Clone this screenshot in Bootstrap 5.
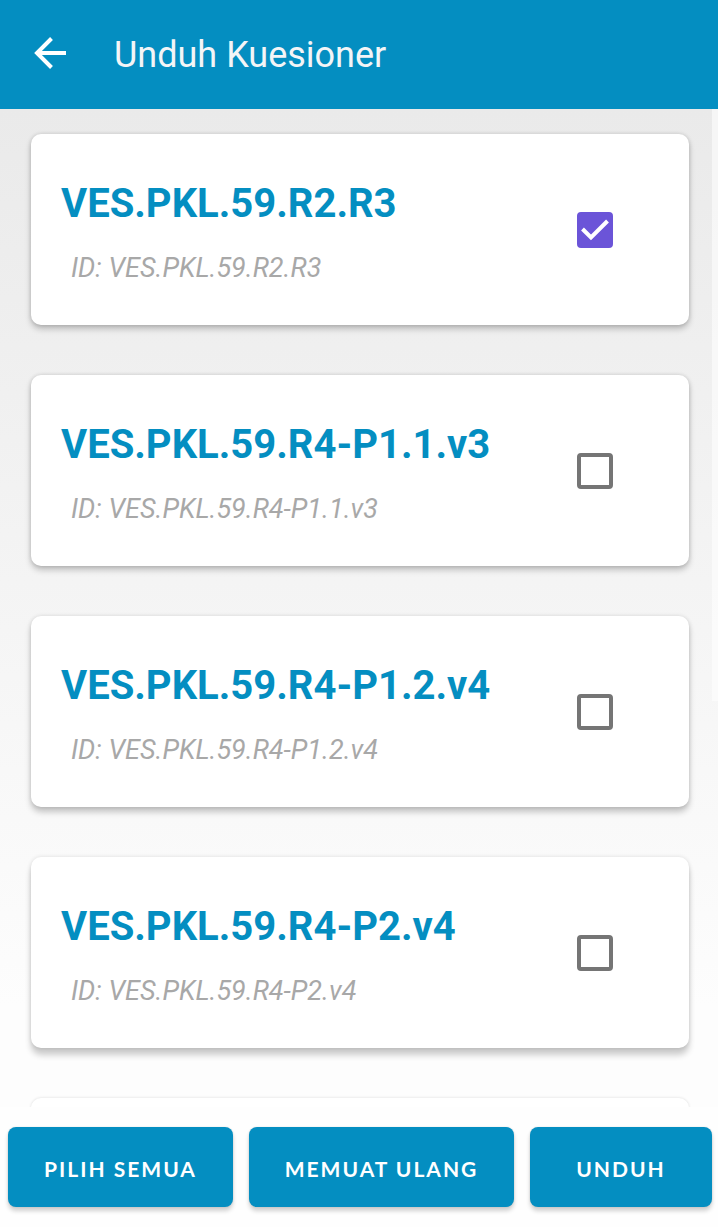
<!DOCTYPE html>
<html lang="id">
<head>
<meta charset="utf-8">
<meta name="viewport" content="width=device-width, initial-scale=1">
<title>Unduh Kuesioner</title>
<link href="https://cdn.jsdelivr.net/npm/bootstrap@5.3.0/dist/css/bootstrap.min.css" rel="stylesheet">
<style>
  body { font-family: Roboto, "Liberation Sans", sans-serif; background: #fefefe; }
  .top-bar { background: #048ec1; padding: 30px 30px 29px; gap: 44px; }
  .top-bar h1 { font-size: 36px; line-height: 50px; color: #f3f5f7; }
  .list-area { min-height: 0; background: linear-gradient(#eaeaea, #fdfdfd 90%); }
  .list-scroll { overflow-y: auto; scrollbar-width: none; padding: 25px 29px 0 31px; gap: 50px; }
  .list-scroll::-webkit-scrollbar { display: none; }
  .scroll-thumb { width: 6px; height: 592px; background: rgba(255, 255, 255, .55); }
  .form-card {
    min-height: 191px; padding: 42px 76px 42px 30px; border-radius: 10px; background: #fff;
    box-shadow: 0 4px 6px rgba(0, 0, 0, .22), 0 0 4px rgba(0, 0, 0, .14);
  }
  .form-card:nth-child(3) { box-shadow: 0 5px 6px rgba(0, 0, 0, .22), 0 0 4px rgba(0, 0, 0, .12); }
  .form-card:nth-child(4) { box-shadow: 0 7px 6px rgba(0, 0, 0, .2), 0 0 4px rgba(0, 0, 0, .12); }
  .form-card:nth-child(5) { box-shadow: 0 0 3px rgba(0, 0, 0, .14); }
  .form-name { font-size: 40px; line-height: 56px; color: #048ec1; }
  .form-id { font-size: 27px; line-height: 30px; color: #a8a8a8; margin: 21px 0 0 10px; }
  .form-card .form-check-input {
    width: 36px; height: 36px; border: 4px solid #757575; border-radius: 4px; background-color: #fff;
  }
  .form-card .form-check-input:checked {
    border-color: #6b54d8; background-color: #6b54d8; background-size: 36px 36px; background-origin: border-box;
    background-image: url("data:image/svg+xml,%3Csvg xmlns='http://www.w3.org/2000/svg' viewBox='0 0 36 36'%3E%3Cpath d='M5.5 17 14 25.500 30.500 9' fill='none' stroke='%23fff' stroke-width='4'/%3E%3C/svg%3E");
  }
  .action-bar { padding: 20px 6px 20px 8px; gap: 16px; }
  .action-bar .btn {
    height: 80px; padding: 4px 0 0; border: 0; border-radius: 8px; background: #048ec1; color: #fff;
    font-family: Lato, sans-serif; font-size: 21px; line-height: 24px; letter-spacing: 2px;
    box-shadow: 0 4px 4px rgba(0, 0, 0, .18), 0 0 2px rgba(0, 0, 0, .12);
  }
  .act-select { flex: 225 1 0; }
  .act-reload { flex: 265 1 0; }
  .act-download { flex: 182 1 0; }
</style>
</head>
<body class="d-flex flex-column vh-100 overflow-hidden">
  <header class="top-bar d-flex align-items-center">
    <a href="#" class="d-flex" aria-label="Kembali">
      <svg width="40" height="40" viewBox="0 0 40 40" fill="none" stroke="#fff" stroke-width="4"><path d="M36 18H7M21.500 3.500 7 18l14.500 14.500"/></svg>
    </a>
    <h1 class="m-0 fw-normal">Unduh Kuesioner</h1>
  </header>

  <main class="list-area flex-grow-1 position-relative">
    <div class="list-scroll d-flex flex-column h-100">
      <label class="form-card d-flex align-items-center justify-content-between flex-shrink-0">
        <span class="d-block">
          <span class="form-name d-block fw-bold">VES.PKL.59.R2.R3</span>
          <span class="form-id d-block fst-italic">ID: VES.PKL.59.R2.R3</span>
        </span>
        <input class="form-check-input m-0 flex-shrink-0" type="checkbox" checked>
      </label>
      <label class="form-card d-flex align-items-center justify-content-between flex-shrink-0">
        <span class="d-block">
          <span class="form-name d-block fw-bold">VES.PKL.59.R4-P1.1.v3</span>
          <span class="form-id d-block fst-italic">ID: VES.PKL.59.R4-P1.1.v3</span>
        </span>
        <input class="form-check-input m-0 flex-shrink-0" type="checkbox">
      </label>
      <label class="form-card d-flex align-items-center justify-content-between flex-shrink-0">
        <span class="d-block">
          <span class="form-name d-block fw-bold">VES.PKL.59.R4-P1.2.v4</span>
          <span class="form-id d-block fst-italic">ID: VES.PKL.59.R4-P1.2.v4</span>
        </span>
        <input class="form-check-input m-0 flex-shrink-0" type="checkbox">
      </label>
      <label class="form-card d-flex align-items-center justify-content-between flex-shrink-0">
        <span class="d-block">
          <span class="form-name d-block fw-bold">VES.PKL.59.R4-P2.v4</span>
          <span class="form-id d-block fst-italic">ID: VES.PKL.59.R4-P2.v4</span>
        </span>
        <input class="form-check-input m-0 flex-shrink-0" type="checkbox">
      </label>
      <div class="form-card flex-shrink-0"></div>
    </div>
    <div class="scroll-thumb position-absolute top-0 end-0"></div>
  </main>

  <footer class="action-bar d-flex">
    <button type="button" class="btn act-select fw-bold">PILIH SEMUA</button>
    <button type="button" class="btn act-reload fw-bold">MEMUAT ULANG</button>
    <button type="button" class="btn act-download fw-bold">UNDUH</button>
  </footer>
<script src="https://cdn.jsdelivr.net/npm/bootstrap@5.3.0/dist/js/bootstrap.bundle.min.js"></script>
</body>
</html>
